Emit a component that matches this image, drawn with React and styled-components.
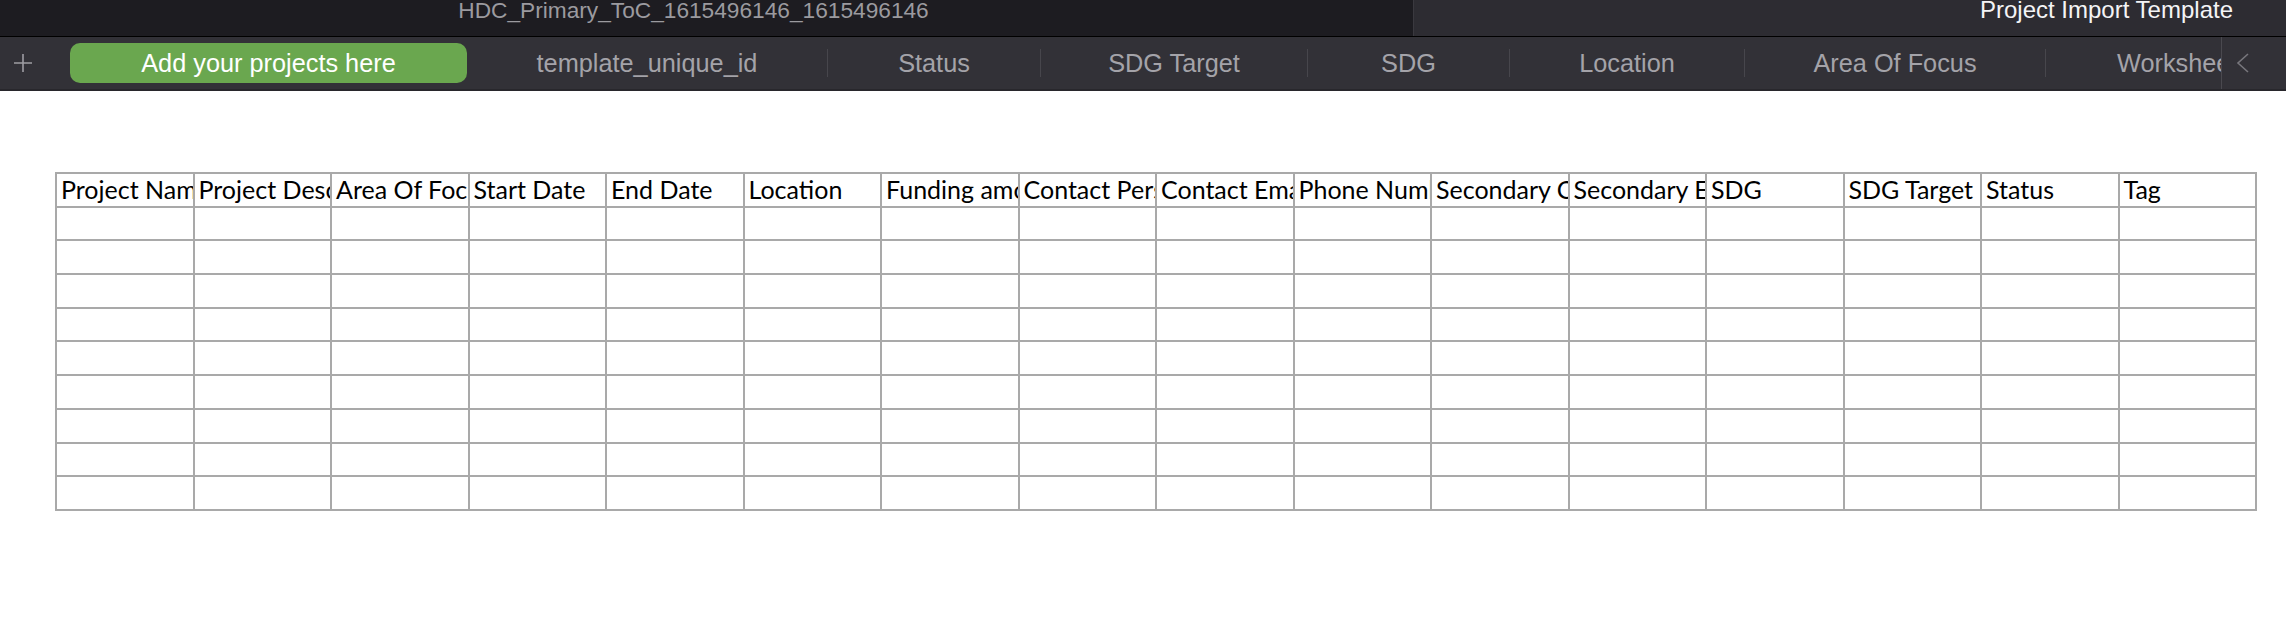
import styled, { createGlobalStyle } from "styled-components";

const GlobalStyle = createGlobalStyle`
    html, body {
        margin: 0;
        padding: 0;
        background: #ffffff;
    }
    body {
        width: 2286px;
        height: 628px;
        overflow: hidden;
        font-family: "Liberation Sans", Arial, sans-serif;
    }
`;

const TitleBar = styled.header`
    display: flex;
    height: 36px;
    border-bottom: 1px solid #000000;
    line-height: 20px;
`;

const DocTitle = styled.div`
    width: 1414px;
    box-sizing: border-box;
    padding-right: 26px;
    background: #1d1c21;
    color: #9b9a9f;
    font-size: 22.7px;
    text-align: center;
    border-right: 1px solid #3a393f;
`;

const SheetTitle = styled.div`
    flex: 1;
    background: #2d2c32;
    color: #f4f4f6;
    font-size: 24px;
    text-align: right;
    padding-right: 53px;
`;

const TabBar = styled.nav`
    display: flex;
    align-items: center;
    height: 52px;
    background: #323137;
    border-bottom: 2px solid #28272c;
    overflow: hidden;
`;

const AddSheet = styled.div`
    width: 45px;
    height: 100%;
    display: flex;
    align-items: center;
    justify-content: center;
    flex: none;
`;

const ActiveTab = styled.div`
    flex: none;
    width: 397px;
    height: 40px;
    margin-left: 25px;
    border-radius: 10px;
    background: #6aa74f;
    color: #ffffff;
    font-size: 25.3px;
    display: flex;
    align-items: center;
    justify-content: center;
`;

const Tab = styled.div`
    flex: none;
    width: ${(p) => p.$w}px;
    font-size: 25.3px;
    color: #a4a3a9;
    text-align: ${(p) => (p.$clip ? "left" : "center")};
    padding-left: ${(p) => (p.$clip ? 71 : 0)}px;
    white-space: nowrap;
    overflow: hidden;
    box-sizing: border-box;
`;

const Divider = styled.div`
    flex: none;
    width: 1px;
    height: 28px;
    background: #47464c;
`;

const ScrollBack = styled.div`
    flex: 1;
    height: 100%;
    border-left: 1px solid #4a494f;
    display: flex;
    align-items: center;
    padding-left: 14px;
`;

const Sheet = styled.main`
    padding: 81px 0 0 55px;
`;

const Grid = styled.table`
    border-collapse: collapse;
    table-layout: fixed;
    width: 2202px;
    font-family: Lato, "Open Sans", sans-serif;
    font-size: 25px;
    color: #000000;
`;

const Cell = styled.td`
    border: 2px solid #a9a9a9;
    height: 29.7px;
    padding: 0 0 2px 4px;
    white-space: nowrap;
    overflow: hidden;
    text-overflow: clip;
    line-height: 28px;
`;

const columns = [
    "Project Name",
    "Project Description",
    "Area Of Focus",
    "Start Date",
    "End Date",
    "Location",
    "Funding amount",
    "Contact Person",
    "Contact Email",
    "Phone Number",
    "Secondary Contact",
    "Secondary Email",
    "SDG",
    "SDG Target",
    "Status",
    "Tag",
];

const tabs = [
    { label: "template_unique_id", w: 360 },
    { label: "Status", w: 212 },
    { label: "SDG Target", w: 266 },
    { label: "SDG", w: 201 },
    { label: "Location", w: 234 },
    { label: "Area Of Focus", w: 300 },
];

function App() {
    return (
        <>
            <GlobalStyle />
            <TitleBar>
                <DocTitle>HDC_Primary_ToC_1615496146_1615496146</DocTitle>
                <SheetTitle>Project Import Template</SheetTitle>
            </TitleBar>
            <TabBar>
                <AddSheet>
                    <svg width="20" height="20" viewBox="0 0 20 20">
                        <path d="M10 1v18M1 10h18" stroke="#9e9da3" strokeWidth="1.6" fill="none" />
                    </svg>
                </AddSheet>
                <ActiveTab>Add your projects here</ActiveTab>
                {tabs.map((t) => (
                    <>
                        <Tab key={t.label} $w={t.w}>{t.label}</Tab>
                        <Divider />
                    </>
                ))}
                <Tab $w={175} $clip>Worksheet</Tab>
                <ScrollBack>
                    <svg width="14" height="20" viewBox="0 0 14 20">
                        <path d="M12 1L2 10l10 9" stroke="#77767c" strokeWidth="1.6" fill="none" />
                    </svg>
                </ScrollBack>
            </TabBar>
            <Sheet>
                <Grid>
                    <tbody>
                        <tr>
                            {columns.map((c) => (
                                <Cell key={c}>{c}</Cell>
                            ))}
                        </tr>
                        {Array.from({ length: 9 }).map((_, r) => (
                            <tr key={r}>
                                {columns.map((c) => (
                                    <Cell key={c} />
                                ))}
                            </tr>
                        ))}
                    </tbody>
                </Grid>
            </Sheet>
        </>
    );
}

export default App;
